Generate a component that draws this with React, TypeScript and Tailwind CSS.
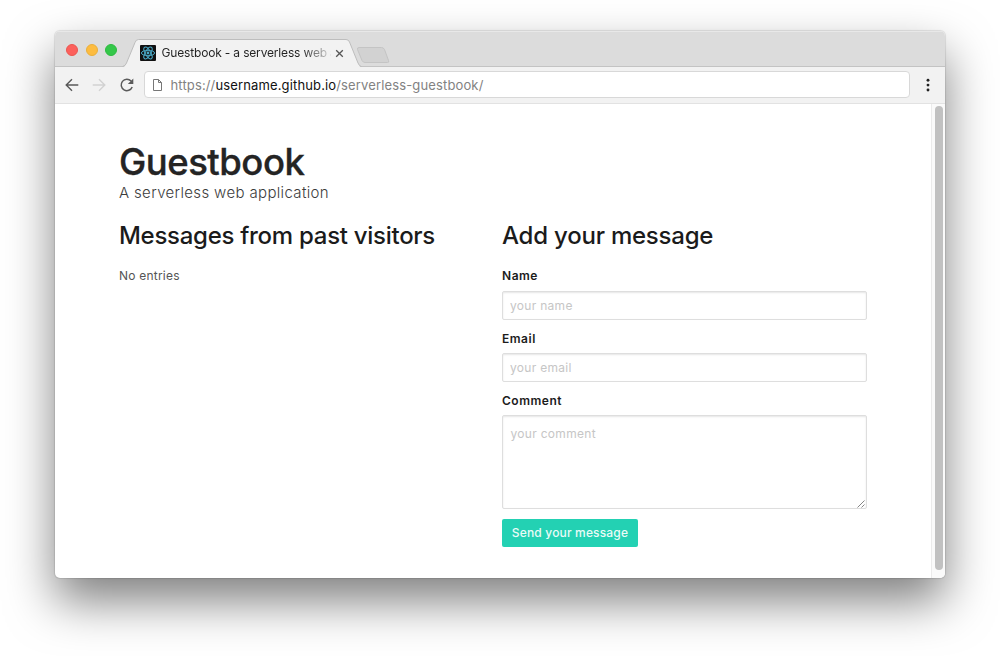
import React from "react";

function Tab() {
  return (
    <div className="relative h-[37px] w-[235px]">
      <svg className="absolute left-0 top-0" width="270" height="37" viewBox="0 0 270 37" fill="none">
        <path d="M2 36.500 Q4.500 35 5.500 32 L14 11.500 Q15 8.500 17.500 8.500 H225 Q227.500 8.500 228.500 11 L237 32 Q238.500 36 240.500 36.500 V37 H2Z" fill="#f2f2f2" />
        <path d="M1.500 35.500 Q4.500 35 5.500 32 L14 11.500 Q15 8.500 17.500 8.500 H225 Q227.500 8.500 228.500 11 L237 32 Q238.500 35.500 240.500 35.500" stroke="#bdbdbd" />
        <path d="M238 16.500 H260.500 Q262.500 16.500 263.500 18.500 L267.500 29.500 Q268.500 31.500 266.500 31.500 H244 Q242 31.500 241 29.500 L236.500 18.500 Q236 16.500 238 16.500Z" fill="#d2d2d2" stroke="#c4c4c4" />
      </svg>
      <div className="relative flex h-full items-center pl-[19px] pt-[7px]">
        <svg width="16" height="16" viewBox="0 0 16 16" fill="none" stroke="#4aa9c6" strokeWidth="1">
          <rect width="16" height="16" rx="1" fill="#111" stroke="none" />
          <ellipse cx="8" cy="8" rx="6.600" ry="2.700" />
          <ellipse cx="8" cy="8" rx="6.600" ry="2.700" transform="rotate(60 8 8)" />
          <ellipse cx="8" cy="8" rx="6.600" ry="2.700" transform="rotate(120 8 8)" />
          <circle cx="8" cy="8" r="1.400" fill="#4aa9c6" stroke="none" />
        </svg>
        <span className="ml-[5.500px] w-[169px] overflow-hidden whitespace-nowrap bg-[linear-gradient(90deg,#222_83%,transparent_102%)] bg-clip-text text-[12px] tracking-[-0.17px] leading-4 text-transparent">
          Guestbook - a serverless web application
        </span>
        <svg className="ml-[4.500px]" width="9" height="9" viewBox="0 0 9 9" stroke="#555" strokeWidth="1.300">
          <path d="M1.200 1.200 7.800 7.800 M7.800 1.200 1.200 7.800" />
        </svg>
      </div>
    </div>
  );
}

function Toolbar() {
  return (
    <div className="flex h-[37px] items-center border-b border-[#e2e2e2] bg-[#f2f2f2] pl-[10px] pb-[1px]">
      <svg width="14" height="14" viewBox="0 0 14 14" fill="none" stroke="#5a5a5a" strokeWidth="1.400">
        <path d="M13.300 7H1.500M7 1.200 1.200 7 7 12.800" />
      </svg>
      <svg className="ml-[13px]" width="14" height="14" viewBox="0 0 14 14" fill="none" stroke="#d2d2d2" strokeWidth="1.400">
        <path d="M.7 7h11.800M7 1.200 12.800 7 7 12.800" />
      </svg>
      <svg className="ml-[13px]" width="16" height="16" viewBox="0 0 16 16" fill="none">
        <path d="M13.200 10A5.700 5.700 0 1 1 12.100 4.100" stroke="#5a5a5a" strokeWidth="1.500" />
        <path d="M14.300 1.500V7H8.800Z" fill="#5a5a5a" />
      </svg>
      <div className="ml-[9px] flex h-[27px] w-[766px] items-center rounded-[4px] border border-[#d8d8d8] bg-white pl-[8px]">
        <svg width="9" height="12" viewBox="0 0 9 12" fill="none" stroke="#777">
          <path d="M.5.500H5.500L8.500 3.500V11.500H.5ZM5.500.500V3.500H8.500" />
        </svg>
        <span className="ml-[8.500px] whitespace-nowrap text-[13px] tracking-[0.14px] leading-5 text-[#828282]">
          https://<span className="text-[#111]">username.github.io</span>/serverless-guestbook/
        </span>
      </div>
      <svg className="ml-[16px]" width="4" height="14" viewBox="0 0 4 14" fill="#222">
        <circle cx="2" cy="2.200" r="1.450" />
        <circle cx="2" cy="7.100" r="1.450" />
        <circle cx="2" cy="12" r="1.450" />
      </svg>
    </div>
  );
}

const label = "block h-4 text-[12px] font-semibold leading-4 tracking-[0.52px] text-[#1c1c1c]";
const input =
  "block w-[365px] rounded-[2px] border border-[#dedede] bg-white text-[12px] tracking-[0.3px] text-[#333] shadow-[inset_0_1px_2px_rgba(10,10,10,0.1)] outline-none placeholder:text-[#c6c6c6] placeholder:opacity-100";

export default function App() {
  return (
    <div className="h-[656px] w-[1000px] overflow-hidden bg-white px-[55px] pt-[31px] font-['Inter','Liberation_Sans',sans-serif]">
      <div className="h-[547px] w-[890px] overflow-hidden rounded-[5px] bg-white shadow-[0_0_1px_1px_rgba(0,0,0,0.1),0_23px_48px_rgba(0,0,0,0.5)]">
        <div className="flex h-[36px] border-b border-[#c3c3c3] bg-[#dcdcdc] shadow-[inset_0_1px_0_#e8e8e8]">
          <div className="flex w-[66px] gap-[8px] pl-[11px] pt-[12.500px]">
            <span className="size-[12px] shrink-0 rounded-full border border-[#ec5650] bg-[#fc605c]" />
            <span className="-ml-[0.500px] size-[12px] shrink-0 rounded-full border border-[#eab03a] bg-[#fdbc40]" />
            <span className="-ml-[0.500px] size-[12px] shrink-0 rounded-full border border-[#2dbb40] bg-[#34c749]" />
          </div>
          <Tab />
        </div>
        <Toolbar />
        <div className="flex h-[474px]">
          <main className="w-[876px] pl-[64px] pt-[36px]">
            <h1 className="h-[44px] whitespace-nowrap text-[36.500px] font-medium leading-[44px] tracking-[-0.5px] text-[#242424] [-webkit-text-stroke:0.35px_#242424]">Guestbook</h1>
            <p className="h-[18px] whitespace-nowrap text-[15px] font-light leading-[18px] tracking-[0.35px] text-[#3c3c3c]">A serverless web application</p>
            <div className="mt-[18px] flex">
              <section className="w-[383px]">
                <h2 className="h-8 whitespace-nowrap text-[24px] font-medium leading-8 tracking-[-0.28px] text-[#1b1b1b]">Messages from past visitors</h2>
                <p className="mt-[16px] text-[12px] leading-4 tracking-[0.22px] text-[#555]">No entries</p>
              </section>
              <form className="w-[365px]" onSubmit={(e) => e.preventDefault()}>
                <h2 className="h-8 whitespace-nowrap text-[24px] font-medium leading-8 tracking-[-0.22px] text-[#1b1b1b]">Add your message</h2>
                <label className={`${label} mt-[16px]`}>Name</label>
                <input className={`${input} mt-[7px] h-[29px] px-[7px]`} placeholder="your name" />
                <label className={`${label} mt-[11px]`}>Email</label>
                <input className={`${input} mt-[6px] h-[29px] px-[7px]`} placeholder="your email" />
                <label className={`${label} mt-[11px]`}>Comment</label>
                <div className="relative mt-[6px]">
                  <textarea className={`${input} h-[94px] resize-none px-[7.500px] pt-[10px] leading-4`} placeholder="your comment" />
                  <svg className="absolute bottom-[1px] right-[2px]" width="8" height="8" viewBox="0 0 8 8" stroke="#777" strokeWidth="0.900">
                    <path d="M.5 7.500 7.500.5M4.500 7.500 7.500 4.500" />
                  </svg>
                </div>
                <button className="mt-[10px] h-[28px] w-[136px] whitespace-nowrap rounded-[2px] bg-[#23d1b3] text-[12px] font-medium leading-4 tracking-[0.16px] text-[#e9fbf7]">
                  Send your message
                </button>
              </form>
            </div>
          </main>
          <div className="flex w-[14px] justify-center border-l border-[#ebebeb] bg-[#fafafa] pt-[2px]">
            <div className="h-[464px] w-[8px] rounded-full bg-[#c1c1c1]" />
          </div>
        </div>
      </div>
    </div>
  );
}
